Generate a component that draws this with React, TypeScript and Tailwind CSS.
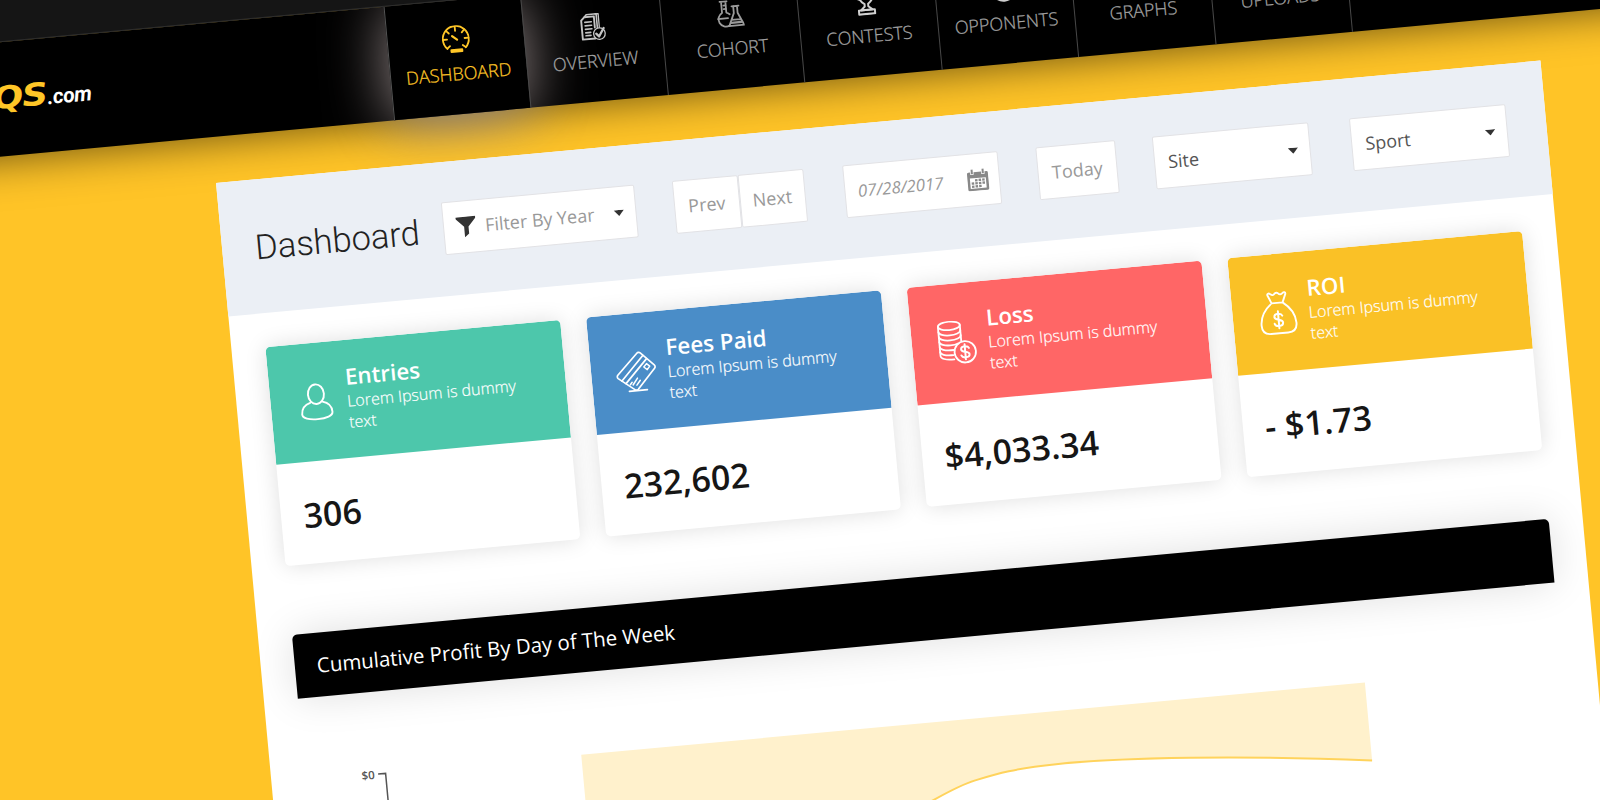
import React from "react";

type IconProps = { className?: string };

const stroke = {
  fill: "none",
  stroke: "currentColor",
  strokeLinecap: "round" as const,
  strokeLinejoin: "round" as const,
};

const GaugeIcon = ({ className }: IconProps) => (
  <svg viewBox="0 0 28 28" className={className} {...stroke} strokeWidth={1.8}>
    <path d="M4.800 22.800A13 13 0 1 1 23.200 22.800" />
    <path d="M14 1.500v4M5 5l2.500 2.600M23 5l-2.500 2.600M1.200 13.500h4M26.800 13.500h-4M4.800 22.600l2.800-2.400M23.200 22.600l-2.800-2.400" />
    <path d="M10.500 10.500l4.700 4" strokeWidth={2.200} />
    <path d="M8.600 24.400h10.800v1.800H8.600z" strokeWidth={2} />
  </svg>
);

const ReportIcon = ({ className }: IconProps) => (
  <svg viewBox="0 0 28 28" className={className} {...stroke} strokeWidth={1.9}>
    <path d="M16 26H3.500V7L7 3.800h9.500V15" />
    <path d="M7 3.500l2-2h10v14" strokeWidth={1.600} />
    <path d="M18 1.500h3v14" strokeWidth={1.300} />
    <path d="M7 9h6.500M7 12.500h6.500M7 16h6.500M7 19.500h5M7 22.500h5" strokeWidth={1.600} />
    <circle cx="20.500" cy="21.500" r="5.800" fill="#000" strokeWidth={1.300} />
    <path d="M17.300 21.300l2.600 3 5.300-8" strokeWidth={2.300} />
  </svg>
);

const FlasksIcon = ({ className }: IconProps) => (
  <svg viewBox="0 0 28 28" className={className} {...stroke} strokeWidth={1.800}>
    <path d="M5 1h7M6.500 1v11.200A7.200 7.200 0 1 0 13 25.400M10.800 1v11.200c1.400.4 2.200 1 3.200 2" />
    <path d="M2 18h10M8.500 5h2M8.500 8.500h2" />
    <path d="M16.500 6.500h7M18.200 6.500v7L12.600 26h15L22 13.500v-7M15.500 20h9" />
    <path d="M15 23h10" strokeWidth={2.200} />
  </svg>
);

const TrophyIcon = ({ className }: IconProps) => (
  <svg viewBox="0 0 28 28" className={className} {...stroke} strokeWidth={2}>
    <path d="M7 2h14v6c0 4-3 7-5.200 8.500v2.500l4 3.500H8.200l4-3.500v-2.500C10 15 7 12 7 8z" />
    <path d="M7 4H2.500c0 5 2 7 5.500 8M21 4h4.500c0 5-2 7-5.500 8" />
    <path d="M6 22.600h16v4H6z" />
  </svg>
);

const TargetIcon = ({ className }: IconProps) => (
  <svg viewBox="0 0 28 28" className={className} {...stroke} strokeWidth={2}>
    <circle cx="14" cy="14" r="12" />
    <path d="M8.500 22h11M10 24h8" strokeWidth={2.400} />
  </svg>
);

const ChartIcon = ({ className }: IconProps) => (
  <svg viewBox="0 0 28 28" className={className} {...stroke} strokeWidth={1.800}>
    <path d="M2 2v24h24M8 20v-6M14 20V8M20 20v-9" />
  </svg>
);

const UploadIcon = ({ className }: IconProps) => (
  <svg viewBox="0 0 28 28" className={className} {...stroke} strokeWidth={1.800}>
    <path d="M14 19V3M8 9l6-6 6 6M3 18v7h22v-7" />
  </svg>
);

const FunnelIcon = ({ className }: IconProps) => (
  <svg viewBox="0 0 20 21" className={className} fill="currentColor">
    <path d="M0 .5h20v1.600L12.400 10.500v7.200L8 21V10.500L0 2.100z" />
  </svg>
);

const CalendarIcon = ({ className }: IconProps) => (
  <svg viewBox="0 0 22 22" className={className}>
    <path
      fill="currentColor"
      fillRule="evenodd"
      d="M2 3h1.800v2.500h3.400V3h7.600v2.500h3.400V3H20a1.500 1.500 0 0 1 1.500 1.500v15.700A1.500 1.500 0 0 1 20 21.700H2A1.500 1.500 0 0 1 .5 20.200V4.500A1.500 1.500 0 0 1 2 3zM3 9v10.500h16V9z"
    />
    <path fill="currentColor" d="M4.500 0h2v4.700h-2zM15.500 0h2v4.700h-2z" />
    <path
      fill="currentColor"
      d="M8 10h2.500v2.300H8zM11.600 10h2.500v2.300h-2.500zM15.200 10h2.500v2.300h-2.500zM4.400 13.100h2.500v2.300H4.400zM8 13.100h2.500v2.300H8zM11.600 13.100h2.500v2.300h-2.500zM15.200 13.100h2.500v2.300h-2.500zM4.400 16.200h2.500v2.300H4.400zM8 16.200h2.500v2.300H8zM11.600 16.200h2.500v2.300h-2.500z"
    />
  </svg>
);

const Caret = () => (
  <svg viewBox="0 0 12 7" className="h-[6px] w-[11px] text-[#333]" fill="currentColor">
    <path d="M0 0h12L6 7z" />
  </svg>
);

const UserIcon = () => (
  <svg viewBox="0 0 44 44" className="size-[44px]" {...stroke} strokeWidth={1.900}>
    <ellipse cx="23" cy="14.500" rx="8" ry="9.800" />
    <path d="M16.500 22.500C11 24 7.500 28 7.500 33.500c0 3.800 6.500 6 15.200 6s15.200-2.200 15.200-6c0-5.500-3.500-9.500-9-11" />
  </svg>
);

const TicketIcon = () => (
  <svg viewBox="0 0 44 44" className="size-[44px]" {...stroke} strokeWidth={1.700}>
    <path d="M24.300 3.200a2.400 2.400 0 0 1 3.400 0L40.600 16.400a2.400 2.400 0 0 1 0 3.400L22.500 39.300a2.400 2.400 0 0 1-3.400 0L3.400 26.800a2.400 2.400 0 0 1 0-3.400z" />
    <path d="M7 29.500L30 6M10.800 32.500L33.500 9.500" />
    <path d="M33 14.500l3 2.800-2.800 3.200-3.200-2.900zM15 34l2-2.300M17.700 34.500l5-6.500M21.500 35l3.800-4.500" strokeWidth={1.500} />
    <path d="M13.500 40.500h18" />
  </svg>
);

const CoinsIcon = () => (
  <svg viewBox="0 0 44 44" className="size-[44px]" {...stroke} strokeWidth={1.800}>
    <ellipse cx="15.500" cy="4.700" rx="11" ry="4.200" />
    <path d="M4.500 4.700v29.500c0 2.400 5 4.300 11 4.300h2.500M26.500 4.700v16" />
    <path d="M4.500 10c0 2.400 5 4.300 11 4.300s11-1.900 11-4.300M4.500 15c0 2.400 5 4.300 11 4.300s11-1.900 11-4.300M4.500 20c0 2.400 5 4.300 11 4.300 3 0 5.500-.4 7.500-1.200M4.500 25c0 2.400 5 4.200 11 4.200h3M4.500 30c0 2.400 5 4.200 11 4.200h2" />
    <circle cx="29.500" cy="32" r="10.700" />
    <path d="M33.500 28.500c-.6-1.500-2-2-4-2-2.200 0-3.900.9-3.900 2.700 0 3.800 8 1.800 8 5.600 0 1.900-1.800 2.800-4.100 2.800-2.200 0-3.700-.8-4.200-2.300M29.500 24.500v15" strokeWidth={2} />
  </svg>
);

const MoneyBagIcon = () => (
  <svg viewBox="0 0 44 44" className="size-[44px]" {...stroke} strokeWidth={1.900}>
    <path d="M17 12L13.500 3.800c-.4-1.700 1.400-2.500 2.600-1.200 1.800 1.700 3.400 1.600 4.600 0 1-1.100 2.600-1.100 3.600 0 1.200 1.600 2.800 1.700 4.600 0 1.200-1.300 3-.5 2.600 1.200L28 12zM17 12C10.500 17 5 25 5 33.500c0 6.500 3.500 9 9 9h17c5.500 0 9-2.500 9-9C40 25 34.500 17 28 12" />
    <path d="M26.500 25.200c-.6-1.700-2-2.300-4-2.300-2.200 0-4 1-4 3 0 4.200 8.200 2 8.200 6.200 0 2.100-1.900 3.100-4.200 3.100-2.200 0-3.800-.9-4.300-2.600M22.500 20.500v17" strokeWidth={2} />
  </svg>
);

const navItems = [
  { label: "OVERVIEW", Icon: ReportIcon, tone: "text-[#c4c4c4]" },
  { label: "COHORT", Icon: FlasksIcon, tone: "text-[#9b9b9b]" },
  { label: "CONTESTS", Icon: TrophyIcon, tone: "text-[#d0d0d0]" },
  { label: "OPPONENTS", Icon: TargetIcon, tone: "text-[#d0d0d0]" },
  { label: "GRAPHS", Icon: ChartIcon, tone: "text-[#9b9b9b]" },
  { label: "UPLOADS", Icon: UploadIcon, tone: "text-[#9b9b9b]" },
];

const cards = [
  { title: "Entries", value: "306", head: "bg-[#4dc7ab]", Icon: UserIcon },
  { title: "Fees Paid", value: "232,602", head: "bg-[#4a8dc8]", Icon: TicketIcon },
  { title: "Loss", value: "$4,033.34", head: "bg-[#ff6666]", Icon: CoinsIcon },
  { title: "ROI", value: "- $1.73", head: "bg-[#fac126]", Icon: MoneyBagIcon },
];

const control =
  "flex h-[53px] shrink-0 items-center border border-[#e2e2e5] bg-white pt-px text-[18px] text-[#999] rounded-[2px]";

const navLabel = "mt-[7px] text-[18px] leading-[26px] font-light [-webkit-text-stroke:0.25px_currentColor]";

function Header() {
  return (
    <header className="flex h-[113.5px] bg-black shadow-[0_0_46px_rgba(0,0,0,0.62)]">
      <div className="flex w-[482.500px] shrink-0 items-baseline justify-end pt-[35px] pr-[298.500px] leading-[40px] italic">
        <span className="origin-right scale-x-[1.16] font-['DejaVu_Sans'] text-[31px] font-bold tracking-[-1px] text-[#ffc627]">
          QS
        </span>
        <span className="font-['Roboto'] text-[21px] font-bold tracking-[-0.400px] text-white">.com</span>
      </div>
      <div className="flex w-[137.5px] shrink-0 flex-col items-center border-l border-[#555] bg-black pt-[24.500px] text-[#ffc627] shadow-[0_4px_60px_rgba(150,138,138,1)]">
        <GaugeIcon className="size-[28px]" />
        <span className={navLabel}>DASHBOARD</span>
      </div>
      {navItems.map(({ label, Icon, tone }) => (
        <div
          key={label}
          className="flex w-[137.5px] shrink-0 flex-col items-center border-l border-[#484848] pt-[24.500px]"
        >
          <Icon className={`size-[28px] ${tone}`} />
          <span className={`${navLabel} text-[#a3a3a3]`}>{label}</span>
        </div>
      ))}
      <div className="border-l border-[#484848]" />
    </header>
  );
}

function Toolbar() {
  return (
    <div className="flex h-[134px] items-start bg-[#ebeff5] pt-[40px]">
      <h1 className="w-[222px] shrink-0 pt-[7.500px] pl-[33px] font-['Roboto'] text-[34.500px] leading-[42px] font-light text-[#222]">
        Dashboard
      </h1>
      <div className={`${control} w-[194px] pr-[11px] pl-[12px]`}>
        <FunnelIcon className="h-[21px] w-[20px] text-[#333]" />
        <span className="ml-[9px] flex-1">Filter By Year</span>
        <Caret />
      </div>
      <div className={`${control} ml-[38px] w-[65.500px] justify-center`}>Prev</div>
      <div className={`${control} w-[66px] justify-center`}>Next</div>
      <div className={`${control} ml-[39px] w-[156.500px] justify-between pr-[10px] pl-[13px]`}>
        <span className="text-[16.800px] italic">07/28/2017</span>
        <CalendarIcon className="size-[22px] text-[#888]" />
      </div>
      <div className={`${control} ml-[38px] w-[79.500px] justify-center`}>Today</div>
      <div className={`${control} ml-[37.500px] w-[156.500px] justify-between pr-[11px] pl-[13px]`}>
        <span className="text-[#555]">Site</span>
        <Caret />
      </div>
      <div className={`${control} ml-[41.500px] w-[156.500px] justify-between pr-[11px] pl-[13px]`}>
        <span className="text-[#555]">Sport</span>
        <Caret />
      </div>
    </div>
  );
}

function StatCards() {
  return (
    <div className="mx-[34px] mt-[34.500px] grid grid-cols-4 gap-[25.700px]">
      {cards.map(({ title, value, head, Icon }) => (
        <section
          key={title}
          className="h-[220px] overflow-hidden rounded-[5px] bg-white shadow-[0_0_22px_rgba(0,0,0,0.13)]"
        >
          <div className={`flex h-[117.500px] pt-[23px] pl-[23px] text-white ${head}`}>
            <div className="pt-[14px]">
              <Icon />
            </div>
            <div className="ml-[9.500px] w-[190px]">
              <h2 className="text-[22.400px] leading-[28px] font-semibold">{title}</h2>
              <p className="text-[16px] leading-[20.500px] font-light [-webkit-text-stroke:0.2px_currentColor]">
                Lorem Ipsum is dummy text
              </p>
            </div>
          </div>
          <div className="pt-[30px] pl-[22.500px] text-[34px] leading-[46px] font-semibold text-[#161616]">
            {value}
          </div>
        </section>
      ))}
    </div>
  );
}

function ProfitChart() {
  return (
    <section className="mx-[34px] mt-[68.500px]">
      <h2 className="h-[64.500px] rounded-t-[5px] bg-black pl-[22px] text-[20.500px] leading-[64px] text-white shadow-[0_0_40px_rgba(0,0,0,0.13)]">
        Cumulative Profit By Day of The Week
      </h2>
      <svg viewBox="0 0 1262 300" className="h-[300px] w-[1262px]">
        <path
          d="M277 82H1064V160.500C1000 152 940 145.500 883 141S790 134.500 749 135S690 139 667 143.700S600 170 560 190L277 298Z"
          fill="#fff1cc"
        />
        <path
          d="M1064 160.500C1000 152 940 145.500 883 141S790 134.500 749 135S690 139 667 143.700S600 170 560 190"
          fill="none"
          stroke="#ffd35c"
          strokeWidth="2"
        />
        <path d="M73 82.500h7.500V300" fill="none" stroke="#555" strokeWidth="1.500" />
        <text x="69.500" y="87" textAnchor="end" className="text-[11.500px] font-semibold" fill="#555">
          $0
        </text>
      </svg>
    </section>
  );
}

export default function App() {
  return (
    <div className="flex h-[800px] w-[1600px] items-start overflow-hidden bg-[#ffc427] font-['Open_Sans',sans-serif]">
      <div className="-mt-[176.800px] -ml-[83.800px] w-[2000px] shrink-0 origin-[300px_359.500px] rotate-[-5.280deg]">
        <div className="relative h-[200px] border-b border-[#2e2e2e] bg-[#151515]" />
        <Header />
        <main className="relative mt-[46px] ml-[300px] h-[820px] w-[1330px] bg-white">
          <Toolbar />
          <StatCards />
          <ProfitChart />
        </main>
      </div>
    </div>
  );
}
